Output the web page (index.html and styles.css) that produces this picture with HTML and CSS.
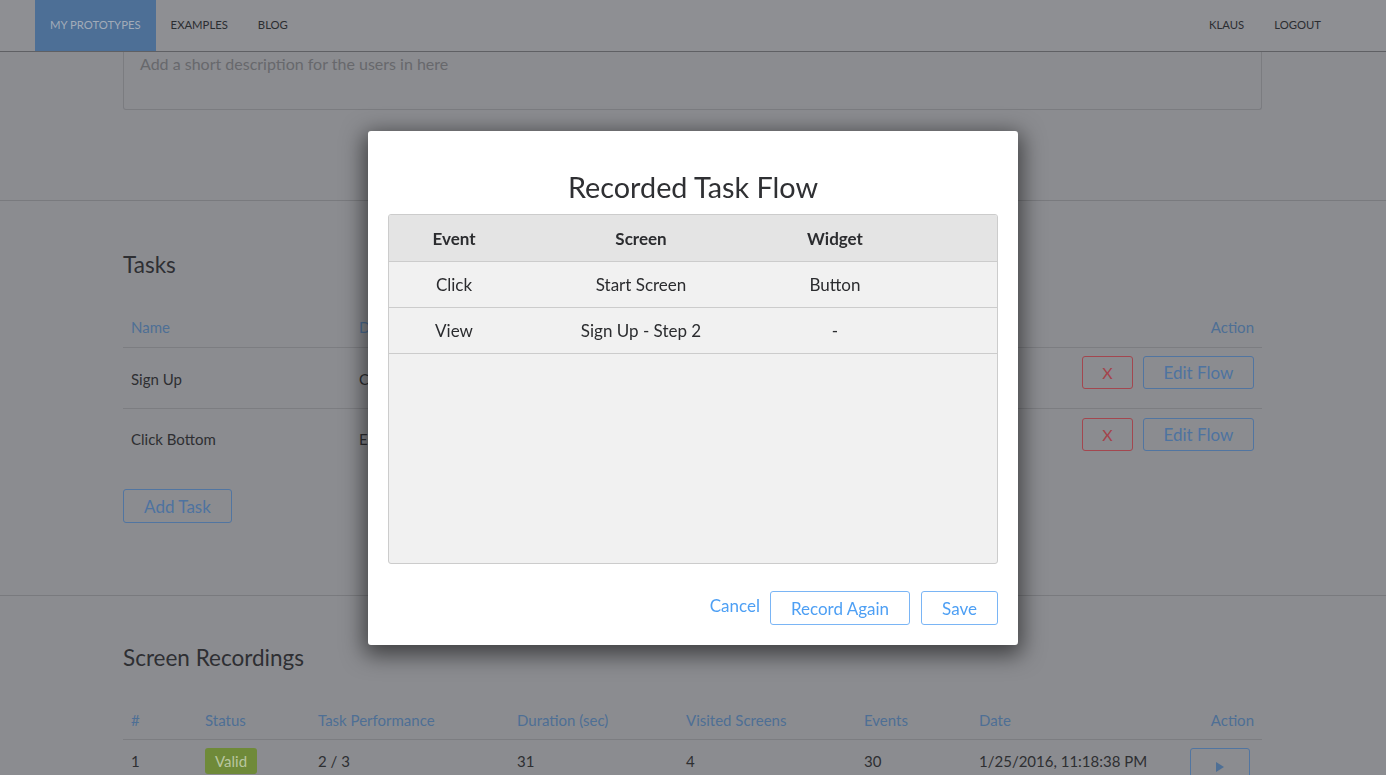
FILE: index.html
```html
<!DOCTYPE html>
<html lang="en">
<head>
<meta charset="utf-8">
<title>Recorded Task Flow</title>
<link rel="stylesheet" href="styles.css">
</head>
<body>
<header class="nav">
  <div class="nav-left">
    <a class="nav-item active">My Prototypes</a>
    <a class="nav-item">Examples</a>
    <a class="nav-item">Blog</a>
  </div>
  <div class="nav-right">
    <a class="nav-item">Klaus</a>
    <a class="nav-item">Logout</a>
  </div>
</header>

<main class="page">
  <section class="section section-desc">
    <div class="container">
      <div class="desc-box">Add a short description for the users in here</div>
    </div>
  </section>

  <section class="section section-tasks">
    <div class="container">
      <h2 class="heading">Tasks</h2>
      <div class="tasks-table">
        <div class="tt-row tt-head">
          <div class="cell">Name</div>
          <div class="cell">Description</div>
          <div class="cell cell-action">Action</div>
        </div>
        <div class="tt-row tt-line">
          <div class="cell">Sign Up</div>
          <div class="cell">Create an account</div>
          <div class="cell cell-action btns">
            <button class="btn btn-danger">X</button>
            <button class="btn btn-primary">Edit Flow</button>
          </div>
        </div>
        <div class="tt-row tt-last">
          <div class="cell">Click Bottom</div>
          <div class="cell">Enter the bottom</div>
          <div class="cell cell-action btns">
            <button class="btn btn-danger">X</button>
            <button class="btn btn-primary">Edit Flow</button>
          </div>
        </div>
      </div>
      <button class="btn btn-primary btn-add">Add Task</button>
    </div>
  </section>

  <section class="section section-rec">
    <div class="container">
      <h2 class="heading">Screen Recordings</h2>
      <div class="rec-table">
        <div class="rt-row rt-head">
          <div>#</div>
          <div>Status</div>
          <div>Task Performance</div>
          <div>Duration (sec)</div>
          <div>Visited Screens</div>
          <div>Events</div>
          <div>Date</div>
          <div class="cell-action">Action</div>
        </div>
        <div class="rt-row rt-body">
          <div>1</div>
          <div><span class="badge">Valid</span></div>
          <div>2 / 3</div>
          <div>31</div>
          <div>4</div>
          <div>30</div>
          <div>1/25/2016, 11:18:38 PM</div>
          <div class="cell-action play-cell"><button class="btn btn-primary btn-play"><svg width="8" height="10" viewBox="0 0 8 10"><path d="M0 0 L8 5 L0 10 Z" fill="currentColor"/></svg></button></div>
        </div>
      </div>
    </div>
  </section>
</main>

<div class="backdrop">
  <div class="modal">
    <h1 class="modal-title">Recorded Task Flow</h1>
    <div class="flow-table">
      <div class="ft-row ft-head">
        <div>Event</div>
        <div>Screen</div>
        <div>Widget</div>
        <div></div>
      </div>
      <div class="ft-row">
        <div>Click</div>
        <div>Start Screen</div>
        <div>Button</div>
        <div></div>
      </div>
      <div class="ft-row">
        <div>View</div>
        <div>Sign Up - Step 2</div>
        <div>-</div>
        <div></div>
      </div>
    </div>
    <div class="modal-footer">
      <a class="link">Cancel</a>
      <button class="mbtn">Record Again</button>
      <button class="mbtn">Save</button>
    </div>
  </div>
</div>
</body>
</html>
```

FILE: styles.css
```css
* { box-sizing: border-box; }

html, body {
  margin: 0;
  padding: 0;
  height: 100%;
  overflow: hidden;
}

body {
  background: #8b8c90;
  font-family: "Source Sans Pro", Lato, "Noto Sans", sans-serif;
  color: #2e2f32;
  font-size: 15px;
}

/* ---------- NAV ---------- */
.nav {
  position: fixed;
  top: 0;
  left: 0;
  right: 0;
  height: 52px;
  background: #8e8f93;
  border-bottom: 1px solid #5f6064;
  display: flex;
  justify-content: space-between;
  padding: 0 50px 0 35px;
  z-index: 5;
}

.nav-left, .nav-right {
  display: flex;
  height: 51px;
}

.nav-item {
  display: flex;
  align-items: center;
  padding: 0 15px 2px;
  font-size: 11.3px;
  text-transform: uppercase;
  color: #2b2d31;
  text-decoration: none;
}

.nav-item.active {
  background: #4d6f96;
  color: #a2abb8;
}

/* ---------- PAGE ---------- */
.container {
  margin-left: 123px;
  width: 1139px;
}

.section + .section {
  border-top: 1px solid #797a7e;
}

.section-desc {
  height: 200px;
}

.desc-box {
  height: 110px;
  border: 1px solid #7b7c80;
  border-top: none;
  border-radius: 0 0 3px 3px;
  padding: 54px 16px 0;
  font-size: 16px;
  color: #67686c;
  line-height: 20px;
}

.heading {
  margin: 0;
  font-weight: 400;
  font-size: 22.5px;
  line-height: 28px;
  color: #2e2f33;
}

.section-tasks {
  height: 395px;
  padding-top: 50px;
}

.section-tasks .heading {
  margin-bottom: 28px;
}

.tasks-table {
  display: flex;
  flex-direction: column;
}

.tt-row {
  display: grid;
  grid-template-columns: 228px 1fr 360px;
  height: 61px;
}

.tt-row .cell {
  padding: 0 8px;
  display: flex;
  align-items: center;
  padding-top: 2px;
}

.tt-last {
  height: 60px;
}

.tt-last .cell {
  padding-top: 0;
}

.tt-head {
  height: 41px;
  border-bottom: 1px solid #7c7d81;
  color: #4e6f95;
}

.tt-head .cell { padding-top: 0; }

.tt-line {
  border-bottom: 1px solid #7c7d81;
}

.cell-action {
  justify-content: flex-end;
  text-align: right;
}

.tt-row .btns {
  align-items: flex-start;
  padding-top: 8px;
  gap: 10px;
}

.tt-last .btns {
  padding-top: 9px;
}

.btn {
  font-family: inherit;
  font-size: 17px;
  background: transparent;
  border: 1px solid;
  border-radius: 3px;
  height: 33px;
  padding: 0 20px;
  line-height: 31px;
}

.btn-danger {
  color: #a4434b;
  border-color: #a3474f;
  width: 51px;
  padding: 0;
  font-size: 16px;
}

.btn-primary {
  color: #4e73a0;
  border-color: #5175a1;
}

.tt-row .btn-primary {
  width: 111px;
  padding: 0;
}

.btn-add {
  margin-top: 20px;
  width: 109px;
  padding: 0;
  height: 34px;
}

.section-rec {
  padding-top: 48px;
}

.section-rec .heading {
  margin-bottom: 39px;
}

.rec-table .rt-row {
  display: grid;
  grid-template-columns: 74px 113px 199px 169px 178px 115px 211px 1fr;
}

.rt-row > div {
  padding: 0 8px;
}

.rt-head {
  height: 29px;
  border-bottom: 1px solid #7c7d81;
  color: #4e6f95;
  align-items: start;
}

.rt-body {
  align-items: center;
  height: 38px;
}

.rt-body > .play-cell {
  display: flex;
  align-self: start;
  padding-top: 8px;
  padding-right: 12px;
}

.badge {
  display: inline-block;
  background: #6f8a39;
  color: #b9c69f;
  border-radius: 3px;
  padding: 0 10px;
  height: 26px;
  line-height: 26px;
  font-size: 15px;
}

.btn-play {
  width: 60px;
  height: 34px;
  padding: 4px 0 0;
  display: flex;
  align-items: center;
  justify-content: center;
  color: #4e6f95;
}

/* ---------- MODAL ---------- */
.backdrop {
  position: fixed;
  inset: 0;
  z-index: 10;
  display: flex;
  justify-content: center;
  align-items: flex-start;
}

.modal {
  margin-top: 131px;
  width: 650px;
  background: #fff;
  border-radius: 3px;
  box-shadow: 0 6px 22px 4px rgba(0, 0, 0, 0.55);
  padding: 39px 20px 20px;
}

.modal-title {
  margin: 0 0 10px;
  text-align: center;
  font-weight: 400;
  font-size: 28.8px;
  line-height: 34px;
  color: #2f3033;
}

.flow-table {
  height: 350px;
  border: 1px solid #cccccc;
  border-radius: 3px;
  background: #f1f1f1;
  overflow: hidden;
}

.ft-row {
  display: grid;
  grid-template-columns: 130px 244px 144px 1fr;
  height: 46px;
  border-bottom: 1px solid #cccccc;
  align-items: center;
  text-align: center;
  font-size: 17px;
  color: #2b2c2f;
}

.ft-head {
  height: 47px;
  background: #e4e4e4;
  font-weight: 700;
}

.modal-footer {
  margin-top: 27px;
  display: flex;
  justify-content: flex-end;
  align-items: center;
  gap: 10px;
}

.link {
  color: #4d9ff4;
  font-size: 17px;
  margin-bottom: 6px;
}

.mbtn {
  font-family: inherit;
  font-size: 17px;
  color: #4d9ff4;
  background: #fff;
  border: 1px solid #7ab5f5;
  border-radius: 3px;
  height: 34px;
  padding: 0 20px;
}

.mbtn + .mbtn {
  margin-left: 1px;
}
```
